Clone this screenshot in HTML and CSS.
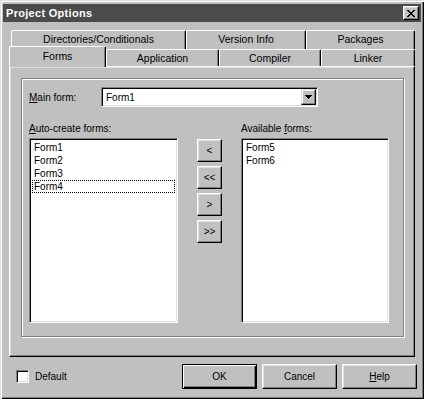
FILE: index.html
```html
<!DOCTYPE html>
<html lang="en">
<head>
    <meta charset="UTF-8">
    <title>Project Options</title>
    <link rel="stylesheet" href="styles.css">
</head>
<body>
    <div class="dialog">
        <div class="titlebar">
            <span class="caption">Project Options</span>
            <span class="close-btn">
                <svg width="8" height="7" viewBox="0 0 8 7" shape-rendering="crispEdges"><path fill="#000" d="M0 0h2v1H0zM6 0h2v1H6zM1 1h2v1H1zM5 1h2v1H5zM2 2h4v1H2zM3 3h2v1H3zM2 4h4v1H2zM1 5h2v1H1zM5 5h2v1H5zM0 6h2v1H0zM6 6h2v1H6z"/></svg>
            </span>
        </div>

        <!-- tab strip, two rows -->
        <div class="tabs">
            <div class="tab-row back">
                <div class="tab tab-dirs">Directories/Conditionals</div>
                <div class="tab tab-version">Version Info</div>
                <div class="tab tab-packages">Packages</div>
            </div>
            <div class="tab-row front">
                <div class="tab tab-forms active">Forms</div>
                <div class="tab tab-app">Application</div>
                <div class="tab tab-compiler">Compiler</div>
                <div class="tab tab-linker">Linker</div>
            </div>
        </div>

        <div class="page">
            <div class="group">
                <div class="form-row">
                    <span class="field-label"><u>M</u>ain form:</span>
                    <div class="combo">
                        <span class="combo-text">Form1</span>
                        <span class="combo-btn">
                            <svg width="7" height="4" viewBox="0 0 7 4" shape-rendering="crispEdges"><path fill="#000" d="M0 0h7v1H0zM1 1h5v1H1zM2 2h3v1H2zM3 3h1v1H3z"/></svg>
                        </span>
                    </div>
                </div>

                <div class="lists">
                    <div class="list-col">
                        <div class="list-label"><u>A</u>uto-create forms:</div>
                        <div class="listbox">
                            <div class="item">Form1</div>
                            <div class="item">Form2</div>
                            <div class="item">Form3</div>
                            <div class="item focused">Form4</div>
                        </div>
                    </div>
                    <div class="move-col">
                        <button class="btn move-btn">&lt;</button>
                        <button class="btn move-btn">&lt;&lt;</button>
                        <button class="btn move-btn">&gt;</button>
                        <button class="btn move-btn">&gt;&gt;</button>
                    </div>
                    <div class="list-col">
                        <div class="list-label">Available <u>f</u>orms:</div>
                        <div class="listbox">
                            <div class="item">Form5</div>
                            <div class="item">Form6</div>
                        </div>
                    </div>
                </div>
            </div>
        </div>

        <div class="bottom-bar">
            <span class="checkbox"></span>
            <span class="check-label">Default</span>
            <span class="spacer"></span>
            <button class="btn dlg-btn default-btn">OK</button>
            <button class="btn dlg-btn">Cancel</button>
            <button class="btn dlg-btn"><u>H</u>elp</button>
        </div>
    </div>
</body>
</html>
```
FILE: styles.css
```css
body{
    margin: 0;
    background-color: #c0c0c0;
    font-family: "Liberation Sans", Arial, sans-serif;
    font-size: 10px;
    color: #000;
}
.dialog{
    width: 424px;
    height: 399px;
    box-sizing: border-box;
    padding-top: 4px;
    background-color: #c0c0c0;
    box-shadow: inset 1px 1px #dfdfdf, inset 2px 2px #fff, inset -1px -1px #000, inset -2px -2px #808080;
}
.titlebar{
    margin: 0 3px;
    height: 18px;
    background-color: #4b4b4b;
    display: flex;
    align-items: center;
    justify-content: space-between;
    padding: 0 2px 0 3px;
}
.caption{
    color: #fff;
    font-weight: bold;
    font-size: 11px;
    letter-spacing: 0.3px;
}
.close-btn{
    width: 16px;
    height: 14px;
    box-sizing: border-box;
    background-color: #c0c0c0;
    border: 1px solid;
    border-color: #fff #000 #000 #fff;
    box-shadow: inset -1px -1px #808080, inset 1px 1px #dfdfdf;
    display: flex;
    align-items: center;
    justify-content: center;
}

/* tabs */
.tabs{
    margin-top: 8px;
}
.tab-row{
    display: flex;
}
.tab-row.back{
    padding-left: 11px;
    height: 19px;
}
.tab-row.front{
    padding-left: 9px;
    height: 20px;
    margin-top: -3px;
    align-items: flex-end;
}
.tab{
    box-sizing: border-box;
    background-color: #c0c0c0;
    border-top: 1px solid #fff;
    border-left: 1px solid #fff;
    border-right: 1px solid #000;
    border-radius: 2px 2px 0 0;
    box-shadow: inset -1px 0 #808080;
    text-align: center;
    line-height: 16px;
    font-size: 10.5px;
}
.back .tab{
    height: 19px;
}
.front .tab{
    height: 17px;
}
.front .tab.active{
    height: 21px;
    margin-bottom: -1px;
    line-height: 18px;
    position: relative;
    z-index: 1;
}
.tab-dirs{ width: 175px; }
.tab-version{ width: 120px; }
.tab-packages{ width: 109px; }
.tab-forms{ width: 97px; }
.tab-app{ width: 113px; }
.tab-compiler{ width: 102px; }
.tab-linker{ width: 94px; }

/* page */
.page{
    margin-left: 9px;
    width: 406px;
    height: 291px;
    box-sizing: border-box;
    border: 1px solid;
    border-color: #fff #000 #000 #fff;
    box-shadow: inset -1px -1px #808080, inset 1px 1px #dfdfdf;
    padding: 11px 0 0 11px;
}
.group{
    width: 383px;
    height: 259px;
    box-sizing: border-box;
    border: 1px solid #808080;
    box-shadow: 1px 1px #fff, inset 1px 1px #fff;
    padding: 8px 0 0 7px;
}
.form-row{
    display: flex;
    align-items: center;
    height: 20px;
}
.field-label{
    width: 72px;
}
.combo{
    width: 217px;
    height: 20px;
    box-sizing: border-box;
    background-color: #fff;
    border: 1px solid;
    border-color: #808080 #fff #fff #808080;
    box-shadow: inset 1px 1px #000, inset -1px -1px #dfdfdf;
    display: flex;
    align-items: center;
    justify-content: space-between;
    padding: 1px 1px 1px 4px;
}
.combo-btn{
    width: 15px;
    height: 16px;
    box-sizing: border-box;
    background-color: #c0c0c0;
    border: 1px solid;
    border-color: #dfdfdf #000 #000 #dfdfdf;
    box-shadow: inset -1px -1px #808080, inset 1px 1px #fff;
    display: flex;
    align-items: center;
    justify-content: center;
}

/* lists */
.lists{
    margin-top: 15px;
    display: grid;
    grid-template-columns: 149px 25px 148px;
    column-gap: 19px;
}
.list-label{
    line-height: 13px;
    margin-bottom: 3px;
}
.listbox{
    height: 185px;
    box-sizing: border-box;
    background-color: #fff;
    border: 1px solid;
    border-color: #808080 #fff #fff #808080;
    box-shadow: inset 1px 1px #000, inset -1px -1px #dfdfdf;
    padding: 2px 1px;
}
.item{
    line-height: 13px;
    height: 13px;
    padding-left: 2px;
    margin-left: 1px;
    margin-right: 1px;
}
.item.focused{
    outline: 1px dotted #000;
    outline-offset: -1px;
}
.move-col{
    padding-top: 17px;
    display: flex;
    flex-direction: column;
    gap: 4px;
}
.btn{
    font-family: "Liberation Sans", Arial, sans-serif;
    font-size: 10px;
    color: #000;
    background-color: #c0c0c0;
    box-sizing: border-box;
    border: 1px solid;
    border-color: #fff #000 #000 #fff;
    box-shadow: inset -1px -1px #808080, inset 1px 1px #dfdfdf;
    padding: 0;
    margin: 0;
}
.move-btn{
    width: 25px;
    height: 23px;
}

/* bottom */
.bottom-bar{
    margin-top: 7px;
    height: 25px;
    display: flex;
    align-items: center;
    padding: 0 7px 0 16px;
}
.checkbox{
    width: 13px;
    height: 13px;
    box-sizing: border-box;
    background-color: #fff;
    border: 1px solid;
    border-color: #808080 #fff #fff #808080;
    box-shadow: inset 1px 1px #000, inset -1px -1px #dfdfdf;
    margin-top: -1px;
}
.check-label{
    margin-left: 6px;
}
.spacer{
    flex: 1;
}
.dlg-btn{
    width: 75px;
    height: 25px;
    margin-left: 5px;
}
.default-btn{
    border: 1px solid #000;
    box-shadow: inset 1px 1px #fff, inset -1px -1px #000, inset -2px -2px #808080;
}
```
